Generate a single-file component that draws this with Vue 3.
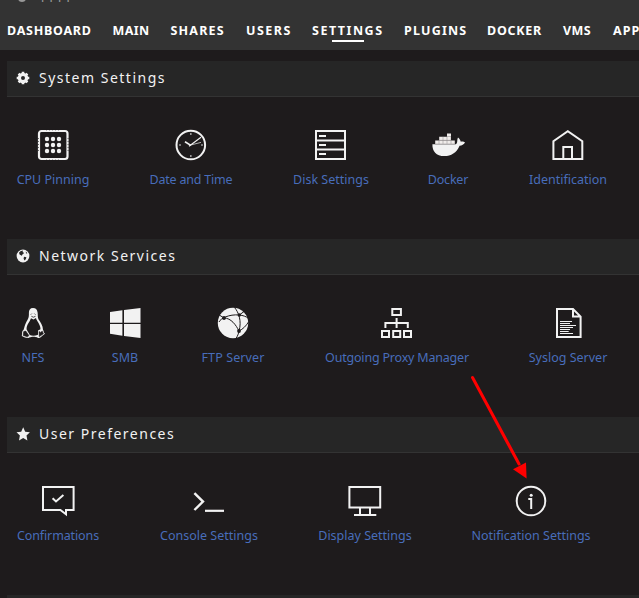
<template>
  <div class="page">
    <header class="header">
      <div class="version"><span class="dot"></span><span class="version-text">TTTT</span></div>
      <nav class="menu">
        <a
          v-for="item in menu"
          :key="item"
          :class="['menu-item', item.toLowerCase(), { active: item === 'SETTINGS' }]"
        >{{ item }}</a>
      </nav>
    </header>

    <section v-for="section in sections" :key="section.id" class="section">
      <div class="title">
        <svg class="title-icon" viewBox="0 0 14 14"><use :href="'#' + section.icon" /></svg>
        <span>{{ section.title }}</span>
      </div>
      <div class="panels" :class="section.id">
        <a v-for="panel in section.panels" :key="panel.label" class="panel">
          <svg class="panel-icon" viewBox="0 0 36 32"><use :href="'#' + panel.icon" /></svg>
          <span class="label" :class="panel.icon + '-label'">{{ panel.label }}</span>
        </a>
      </div>
    </section>
    <div class="title next-title"></div>

    <svg class="arrow" viewBox="0 0 60 106">
      <path d="M4.5 4.5 L51 91" stroke="#f00" stroke-width="3" stroke-linecap="round" />
      <path d="M58.6 105.6 L45 96.2 L58 89.6 Z" fill="#f00" />
    </svg>

    <svg class="sprite" aria-hidden="true">
      <symbol id="gear" viewBox="0 0 14 14">
        <circle cx="7" cy="7" r="3.6" fill="none" stroke="#f2f2f2" stroke-width="3.2" />
        <path d="M7 .7v2.5M7 10.8v2.5M.7 7h2.5M10.8 7h2.5M2.6 2.6l1.7 1.7M9.7 9.7l1.7 1.7M2.6 11.4l1.7-1.7M9.7 4.3l1.7-1.7" stroke="#f2f2f2" stroke-width="2.6" />
      </symbol>
      <symbol id="globe" viewBox="0 0 14 14">
        <circle cx="7" cy="7" r="6.4" fill="#f2f2f2" />
        <path d="M4.4 2.2 L7 1.6 L6.6 3 L8.2 4 L6.4 5.4 L5.8 6.8 L3.6 5.4 L3 3.8Z M8 7.8 L10.4 8.2 L9.8 10.2 L8.4 11.4 L7.6 9.6Z M9.8 2.6 L11.4 4.2 L10 4.6Z" fill="#262626" />
      </symbol>
      <symbol id="star" viewBox="0 0 14 14">
        <path d="M7.2 .2 L9.2 4.7 L13.9 5.2 L10.5 8.5 L11.4 13.4 L7.2 11 L3 13.4 L3.9 8.5 L.5 5.2 L5.2 4.7Z" fill="#f2f2f2" />
      </symbol>

      <symbol id="cpu" viewBox="0 0 36 32">
        <rect x="4" y="2" width="28.5" height="28" rx="2.5" fill="none" stroke="#f2f2f2" stroke-width="2.2" />
        <path d="M3.4 9v15M33.1 9v15" stroke="#1e1b1c" stroke-opacity=".6" stroke-width="1.2" stroke-dasharray="1 2" />
        <path d="M11 1.3h15M11 30.7h15" stroke="#1e1b1c" stroke-opacity=".4" stroke-width=".8" stroke-dasharray="1 2" />
        <g fill="#f2f2f2">
          <template v-for="y in [10, 16, 22]" :key="y">
            <circle v-for="x in [12, 18, 24]" :key="x" :cx="x" :cy="y" r="2.2" />
          </template>
        </g>
      </symbol>
      <symbol id="clock" viewBox="0 0 36 32">
        <circle cx="17.8" cy="16" r="14.3" fill="none" stroke="#f2f2f2" stroke-width="2" />
        <path d="M17.8 16.4 L12 12.8" stroke="#f2f2f2" stroke-width="1.7" />
        <path d="M16 17.3 L28 8.3" stroke="#f2f2f2" stroke-width="1.1" />
        <path d="M17 16.2 L28 13.4" stroke="#f2f2f2" stroke-width=".7" />
        <path d="M17.8 4v2M17.8 26v2M6 16h2M28 16h2" stroke="#999" stroke-width="1.6" />
      </symbol>
      <symbol id="disk" viewBox="0 0 36 32">
        <path d="M3 2h29v28H3zM3 11.5h29M3 20.6h29" fill="none" stroke="#f2f2f2" stroke-width="2" />
        <path d="M6 7h7M6 16h7M6 25h7" stroke="#f2f2f2" stroke-width="2" />
      </symbol>
      <symbol id="docker" viewBox="0 0 36 32">
        <path d="M2.4 15.2H26C28 13.5 26.7 11 28 8.6C29.8 10 30.5 11.5 30.8 12.8C32 12.3 34 12.6 35 13.6C34 15.5 31.8 16.8 29.6 16.8C26.5 24 21 27.1 14.5 27.1C6 27.1 2.2 22 2.4 15.2Z" fill="#f2f2f2" />
        <path d="M5.2 11.4h19.6v3.5H5.2zM9.2 7.8h11.7v3.4H9.2zM17 4.6h4v3H17z" fill="#f0ecea" />
        <path d="M9 11.3v3.6M13 7.8v7M17 7.8v7M21 11.3v3.6M9.2 11.3h11.7M5.2 15h19.6" stroke="#8c8888" stroke-width=".5" />
      </symbol>
      <symbol id="house" viewBox="0 0 36 32">
        <path d="M3.4 30V12.3L17.8 2.2L32.3 12.3V30ZM13.3 30V18H22V30" fill="none" stroke="#f2f2f2" stroke-width="2" />
      </symbol>

      <symbol id="linux" viewBox="0 0 36 32">
        <path d="M18 1C15 1 13.8 3 13.9 6C14.1 11 12.8 12.5 11 15.7C9.5 18.5 9.5 20.5 8.5 23C6.6 24.3 7.4 26 6.8 29C9 30 11 31 12.8 31C14.5 31 15 29.8 18.5 29.8C21.8 29.8 22 31 24 31C26 31 27 28.5 30 26.8C28.3 25.5 29 24.3 28 22.8C28 18.5 25.3 15 23.6 12.5C22.5 10.5 23 8 22.6 5.4C22.2 2.4 20.6 1 18 1Z" fill="#f2f2f2" />
        <path d="M16 11.2L18.5 12.5L21 11C21.5 14 25.5 17 25.5 22.2L23 23.6V27.8C20 29 16.5 28.8 14.8 28L11.6 22.5C11.3 17.5 14.8 15 16 11.2Z" fill="#1e1b1c" />
        <path d="M15.8 7.6l1-1M19.4 6.6l1 1M16.4 9.3l2 .9 2.1-.9" fill="none" stroke="#1e1b1c" stroke-width=".8" />
        <path d="M8.7 24.6l2-.6 3.2 4.6-1.4 1.2-4.3-1.4zM24 24.4l1.3 1 2-1.2 1.1 2.6-4.1 2.8z" fill="#1e1b1c" stroke="#1e1b1c" stroke-width=".6" />
      </symbol>
      <symbol id="windows" viewBox="0 0 36 32">
        <path d="M3 5L15.4 3.2V15.8H3ZM17 3L33.5 1V15.8H17ZM3 17H15.4V28.7L3 26.8ZM17 17H33.5V31L17 29Z" fill="#f2f2f2" />
      </symbol>
      <symbol id="ftp" viewBox="0 0 36 32">
        <circle cx="18" cy="16" r="15.2" fill="#f2f2f2" />
        <path d="M4 15C5.5 11.5 14 7 24.3 8C28 8.4 31 9.5 33 11M19.5 .5C23.5 5 27 14 24 24C23.5 27 22.5 29 21 31.5M9 11C16 11 21 18 24 24M3.5 7.5L9 11M24 24C28 22 31 19 33.5 15M24.3 8L29 4.5" fill="none" stroke="#1e1b1c" stroke-width="1" />
        <g fill="#1e1b1c">
          <circle cx="9" cy="11" r="1.9" />
          <circle cx="24.3" cy="8" r="1.7" />
          <circle cx="24" cy="24" r="1.9" />
        </g>
      </symbol>
      <symbol id="proxy" viewBox="0 0 36 32">
        <path d="M13.3 2h8.6v6h-8.6zM3 24h7v6H3zM14.2 24h7v6h-7zM25 24h7v6h-7zM17.6 11v10M6.4 21v-5h22.4v5" fill="none" stroke="#f2f2f2" stroke-width="2" />
      </symbol>
      <symbol id="syslog" viewBox="0 0 36 32">
        <path d="M7 2H23L30.6 9.6V30H7ZM23 2V9.4H30.6" fill="none" stroke="#f2f2f2" stroke-width="2" />
        <path d="M10 14.5h12M10 16.5h10M10 18.5h16M10 20.5h13M10 22.5h10M10 24.5h8.7M10 26.5h13" stroke="#f2f2f2" stroke-width="1" />
      </symbol>

      <symbol id="confirm" viewBox="0 0 36 32">
        <path d="M3 2H33.6V25H26V29.3L20.4 25H3Z" fill="none" stroke="#f2f2f2" stroke-width="2" />
        <path d="M12.6 13.2L16 16.4L23.4 10" fill="none" stroke="#f2f2f2" stroke-width="2" />
      </symbol>
      <symbol id="console" viewBox="0 0 36 32">
        <path d="M3.4 8.2L12 16.6L3.4 25" fill="none" stroke="#f2f2f2" stroke-width="2.4" />
        <path d="M14 25.8h19" stroke="#f2f2f2" stroke-width="2.2" />
      </symbol>
      <symbol id="display" viewBox="0 0 36 32">
        <path d="M2.4 2H33.2V22.6H2.4ZM13 23v6M23 23v6M7 30h22.3" fill="none" stroke="#f2f2f2" stroke-width="2" />
      </symbol>
      <symbol id="info" viewBox="0 0 36 32">
        <circle cx="18" cy="16" r="14.3" fill="none" stroke="#f2f2f2" stroke-width="2" />
        <path d="M15.3 14h2.9v10" fill="none" stroke="#f2f2f2" stroke-width="2" />
        <circle cx="18.2" cy="10.3" r="1.5" fill="#f2f2f2" />
      </symbol>
    </svg>
  </div>
</template>

<script setup>
const menu = ['DASHBOARD', 'MAIN', 'SHARES', 'USERS', 'SETTINGS', 'PLUGINS', 'DOCKER', 'VMS', 'APPS']

const sections = [
  {
    id: 'system',
    title: 'System Settings',
    icon: 'gear',
    panels: [
      { label: 'CPU Pinning', icon: 'cpu' },
      { label: 'Date and Time', icon: 'clock' },
      { label: 'Disk Settings', icon: 'disk' },
      { label: 'Docker', icon: 'docker' },
      { label: 'Identification', icon: 'house' }
    ]
  },
  {
    id: 'network',
    title: 'Network Services',
    icon: 'globe',
    panels: [
      { label: 'NFS', icon: 'linux' },
      { label: 'SMB', icon: 'windows' },
      { label: 'FTP Server', icon: 'ftp' },
      { label: 'Outgoing Proxy Manager', icon: 'proxy' },
      { label: 'Syslog Server', icon: 'syslog' }
    ]
  },
  {
    id: 'user',
    title: 'User Preferences',
    icon: 'star',
    panels: [
      { label: 'Confirmations', icon: 'confirm' },
      { label: 'Console Settings', icon: 'console' },
      { label: 'Display Settings', icon: 'display' },
      { label: 'Notification Settings', icon: 'info' }
    ]
  }
]
</script>

<style>
body {
  background: #1e1b1c;
  overflow: hidden;
}
</style>

<style scoped>
.page {
  position: relative;
  height: 598px;
  overflow: hidden;
  background: #1e1b1c;
  color: #f2f2f2;
  font-family: "Noto Sans", sans-serif;
}

.header {
  height: 50px;
  background: #333;
  overflow: hidden;
}

.version {
  display: flex;
  align-items: flex-end;
  height: 2px;
  padding-left: 18px;
  overflow: hidden;
  color: #999;
}

.dot {
  flex: none;
  width: 8px;
  height: 8px;
  margin-right: 13px;
  border-radius: 50%;
  background: #999;
}

.version-text {
  font-size: 13px;
  line-height: 8px;
  letter-spacing: 1px;
}

.menu {
  display: grid;
  grid-template-columns: 105.5px 58px 75.5px 66px 92px 83px 76px 50px 60px;
  padding: 19px 0 0 7px;
}

.menu-item {
  position: relative;
  font-size: 12.5px;
  font-weight: 700;
  line-height: 20px;
  letter-spacing: 1.5px;
  color: #fff;
}

.menu-item.dashboard,
.menu-item.docker {
  letter-spacing: 0.75px;
}

.menu-item.main,
.menu-item.vms {
  letter-spacing: 0.4px;
}

.menu-item.shares,
.menu-item.plugins {
  letter-spacing: 1.2px;
}

.menu-item.apps {
  letter-spacing: 1px;
}

.menu-item.active::after {
  content: "";
  position: absolute;
  left: 20px;
  top: 19px;
  width: 32px;
  height: 2px;
  background: #fff;
}

.section {
  height: 178px;
}

.section:first-of-type {
  padding-top: 11px;
}

.title {
  display: flex;
  align-items: center;
  box-sizing: border-box;
  height: 36px;
  margin-left: 7px;
  padding: 0 0 2px 9px;
  background: #262626;
  border-bottom: 1px solid #333;
  font-size: 14px;
  letter-spacing: 1.5px;
}

.title-icon {
  width: 14px;
  height: 14px;
  margin-right: 9px;
}

.panels {
  display: grid;
  padding-top: 32px;
}

.system {
  grid-template-columns: 106px 170px 110px 124px 116px;
}

.network {
  grid-template-columns: 66px 118px 98px 230px 112px;
}

.user {
  grid-template-columns: 116px 186px 126px 206px;
}

.panel {
  display: flex;
  flex-direction: column;
  align-items: center;
}

.panel-icon {
  width: 36px;
  height: 32px;
}

.label {
  margin-top: 9px;
  font-size: 12.5px;
  line-height: 20px;
  white-space: nowrap;
  color: #486dba;
}

.clock-label,
.proxy-label,
.docker-label {
  letter-spacing: -0.2px;
}

.confirm-label {
  letter-spacing: -0.12px;
}

.ftp-label {
  letter-spacing: 0.12px;
}

.arrow {
  position: absolute;
  left: 468px;
  top: 373px;
  width: 60px;
  height: 106px;
}

.sprite {
  position: absolute;
  width: 0;
  height: 0;
}
</style>
